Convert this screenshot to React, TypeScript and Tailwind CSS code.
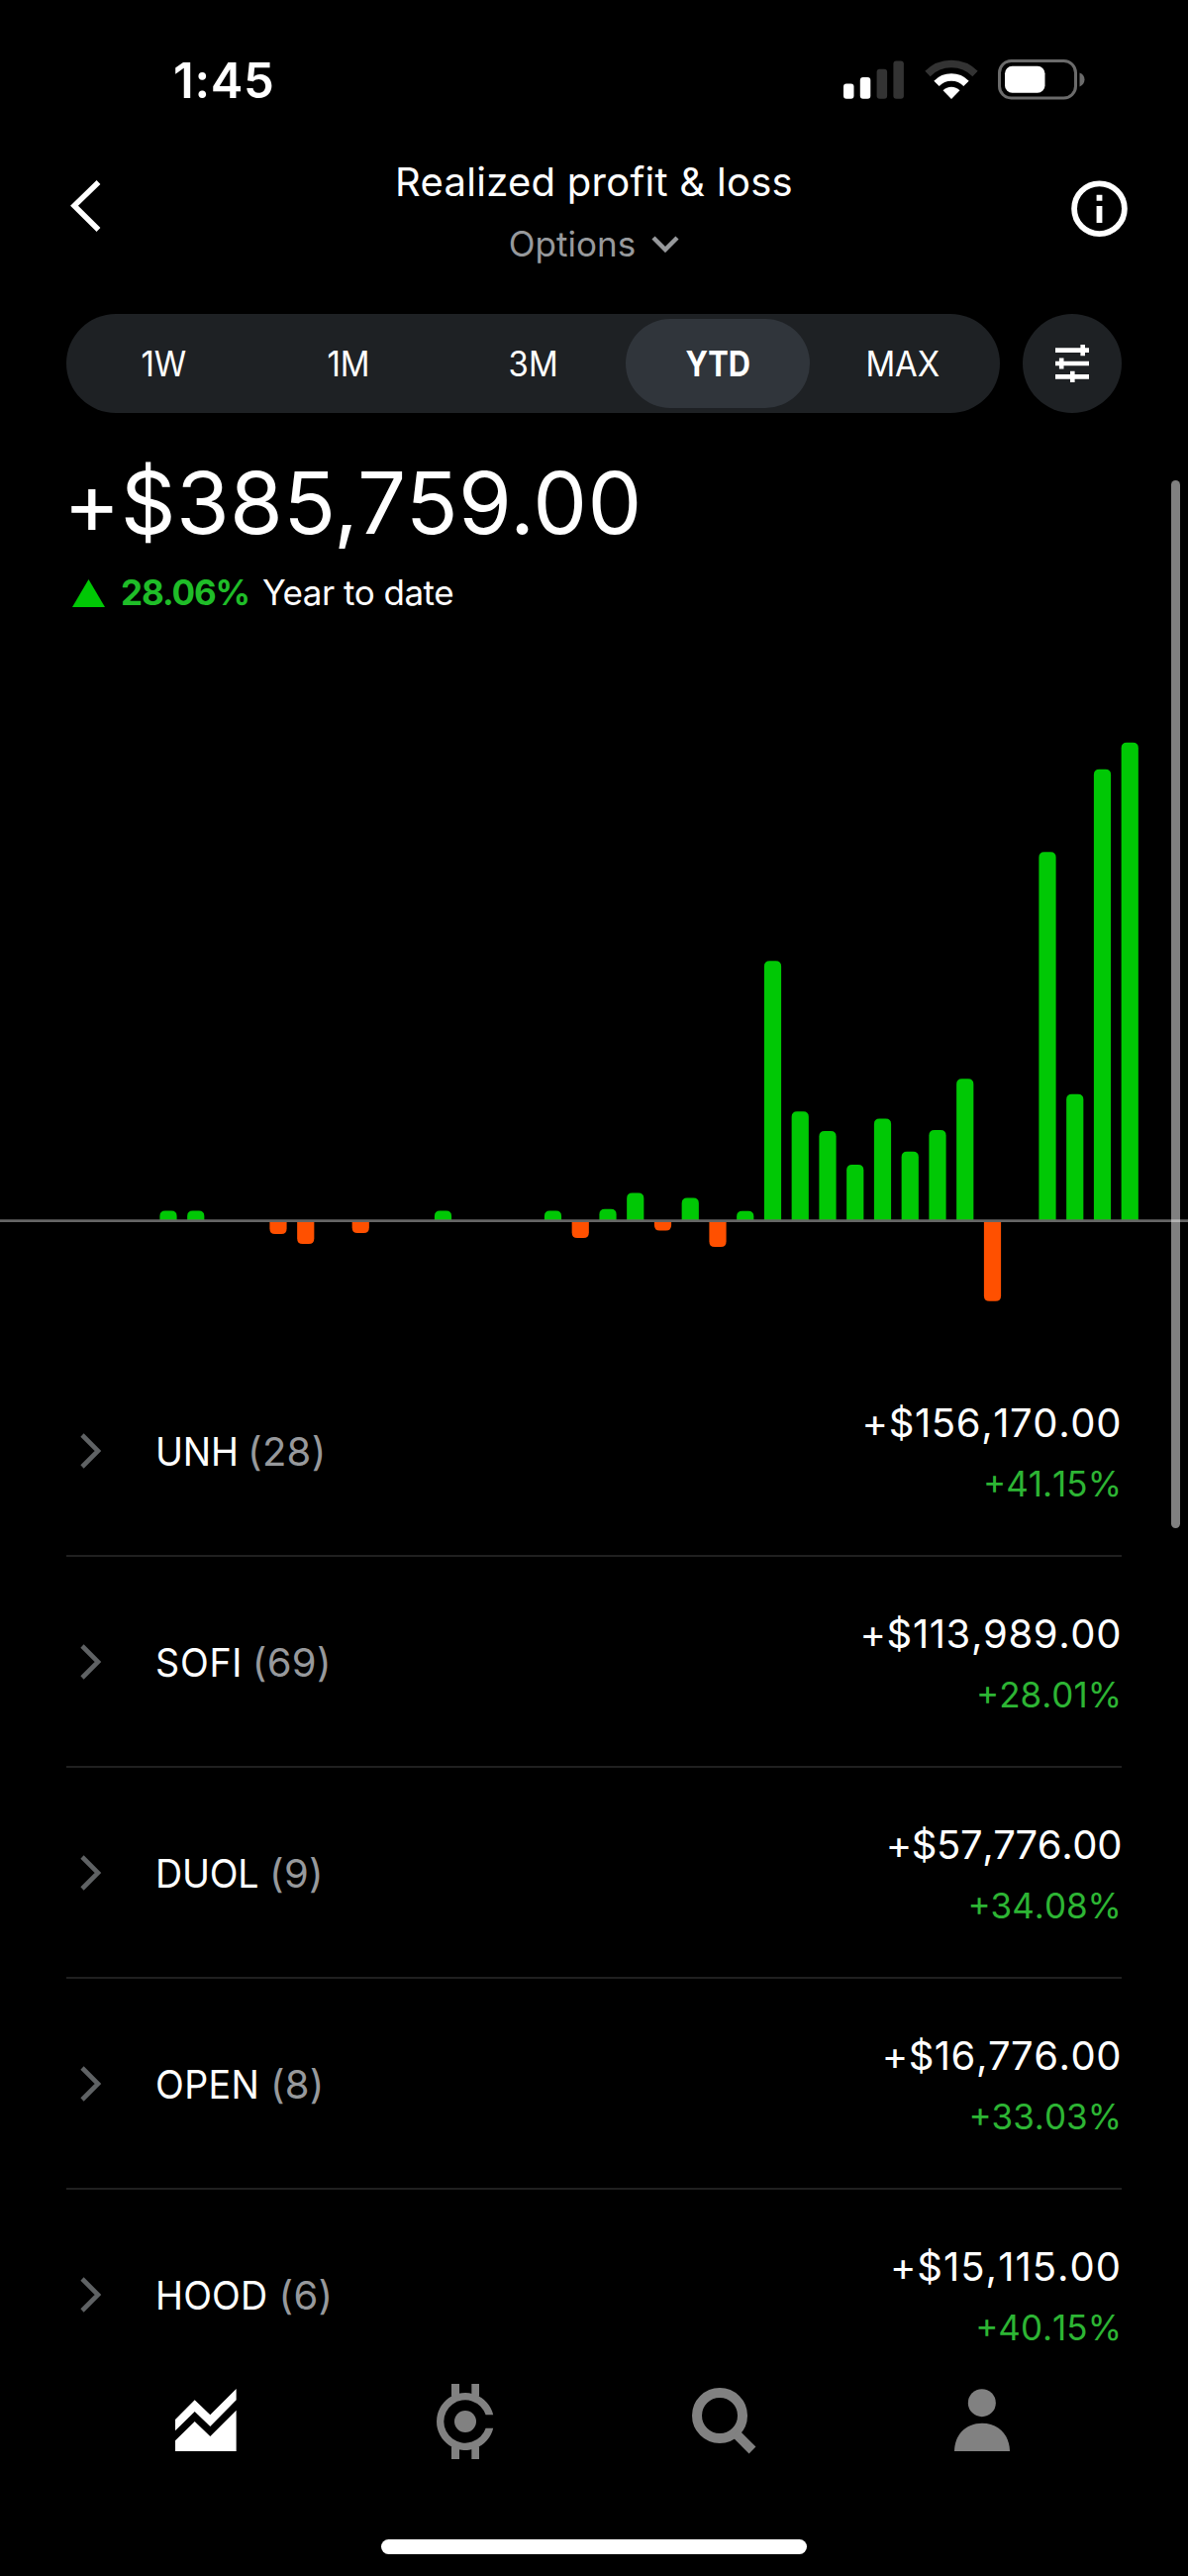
type Position = {
    symbol: string;
    count: number;
    amount: string;
    percent: string;
    nameClass: string;
    amountClass: string;
};

type Bar = {
    slot: number;
    edge: number;
};

const RANGES = ["1W", "1M", "3M", "YTD", "MAX"];

const POSITIONS: Position[] = [
    {
        symbol: "UNH",
        count: 28,
        amount: "+$156,170.00",
        percent: "+41.15%",
        nameClass: "tracking-[-0.2px]",
        amountClass: "tracking-[0.6px]",
    },
    {
        symbol: "SOFI",
        count: 69,
        amount: "+$113,989.00",
        percent: "+28.01%",
        nameClass: "tracking-[0.8px]",
        amountClass: "tracking-[0.6px]",
    },
    {
        symbol: "DUOL",
        count: 9,
        amount: "+$57,776.00",
        percent: "+34.08%",
        nameClass: "tracking-[-0.2px]",
        amountClass: "tracking-[-0.4px]",
    },
    {
        symbol: "OPEN",
        count: 8,
        amount: "+$16,776.00",
        percent: "+33.03%",
        nameClass: "tracking-[0.4px]",
        amountClass: "tracking-[0.5px]",
    },
    {
        symbol: "HOOD",
        count: 6,
        amount: "+$15,115.00",
        percent: "+40.15%",
        nameClass: "tracking-[0.2px]",
        amountClass: "tracking-[1px]",
    },
];

// edge: distance of the bar's end from the zero line, negative for a loss
const BARS: Bar[] = [
    { slot: 0, edge: 10 },
    { slot: 1, edge: 10 },
    { slot: 4, edge: -13.5 },
    { slot: 5, edge: -23.5 },
    { slot: 7, edge: -12.5 },
    { slot: 10, edge: 10 },
    { slot: 14, edge: 10 },
    { slot: 15, edge: -17.5 },
    { slot: 16, edge: 11.7 },
    { slot: 17, edge: 28 },
    { slot: 18, edge: -10 },
    { slot: 19, edge: 23 },
    { slot: 20, edge: -26.5 },
    { slot: 21, edge: 9.7 },
    { slot: 22, edge: 262.2 },
    { slot: 23, edge: 110.2 },
    { slot: 24, edge: 90.5 },
    { slot: 25, edge: 56.5 },
    { slot: 26, edge: 103 },
    { slot: 27, edge: 69.8 },
    { slot: 28, edge: 91.5 },
    { slot: 29, edge: 143.2 },
    { slot: 30, edge: -81.2 },
    { slot: 32, edge: 372.2 },
    { slot: 33, edge: 127.8 },
    { slot: 34, edge: 455.8 },
    { slot: 35, edge: 482.8 },
];

const ZERO = 532.5;

function barPath({ slot, edge }: Bar) {
    const x = 161.4 + slot * 27.75;
    const r = 5.5;
    const end = ZERO - edge;
    const dir = edge > 0 ? 1 : -1;
    return `M${x} ${ZERO}V${end + r * dir}Q${x} ${end} ${x + r} ${end}H${x + 17.2 - r}Q${x + 17.2} ${end} ${x + 17.2} ${end + r * dir}V${ZERO}Z`;
}

function StatusBar() {
    return (
        <div className="flex h-[150px] items-start justify-between pl-[175px] pr-[104px]">
            <div className="mt-[52px] text-[49px] font-semibold leading-[60px] tracking-[0.7px]">1:45</div>
            <div className="mt-[60px] flex">
                <svg width="61" height="41" viewBox="0 0 61 41" className="mr-[21px]">
                    <rect x="0" y="24.5" width="10.5" height="15.3" rx="3" fill="#fff" />
                    <rect x="16.8" y="18" width="10.5" height="21.8" rx="3" fill="#fff" />
                    <rect x="33.6" y="9.8" width="10.5" height="30" rx="3" fill="#333" />
                    <rect x="50.4" y="1.4" width="10.5" height="38.4" rx="3" fill="#333" />
                </svg>
                <svg width="54" height="41" viewBox="0 0 54 41" className="mr-5">
                    <path d="M3 14.5A34 34 0 0 1 51 14.5" fill="none" stroke="#333" strokeWidth="7.5" />
                    <path d="M12 24.3A21 21 0 0 1 42 24.3" fill="none" stroke="#fff" strokeWidth="7.5" />
                    <path d="M27 40L18.5 31.3A12 12 0 0 1 35.5 31.3Z" fill="#fff" />
                </svg>
                <svg width="88" height="41" viewBox="0 0 88 41">
                    <rect x="1.5" y="1.5" width="77" height="37.5" rx="12" fill="none" stroke="#6b6b6b" strokeWidth="3" />
                    <rect x="7" y="6.8" width="40.5" height="27" rx="7.5" fill="#fff" />
                    <path d="M82.5 13.5C85.5 14.5 87.5 17 87.5 20.3S85.5 26.5 82.5 27.5Z" fill="#6b6b6b" />
                </svg>
            </div>
        </div>
    );
}

function Header() {
    return (
        <header className="flex h-[167px] items-start justify-between pl-[71px] pr-[61px]">
            <svg width="31" height="52" viewBox="0 0 31 52" className="mr-4 mt-8">
                <path d="M28.5 2L4 25.7L28.5 50" fill="none" stroke="#fff" strokeWidth="5.5" />
            </svg>
            <div className="flex flex-col items-center">
                <h1 className="mt-[9px] text-[40px] leading-[49px] tracking-[0.27px]">Realized profit &amp; loss</h1>
                <div className="mt-[14px] flex items-center gap-4 text-[35px] leading-[48px] text-[#97999c]">
                    Options
                    <svg width="28" height="17" viewBox="0 0 28 17">
                        <path d="M2 2L14 14L26 2" fill="none" stroke="currentColor" strokeWidth="4.5" />
                    </svg>
                </div>
            </div>
            <svg width="57" height="57" viewBox="0 0 57 57" className="mt-8">
                <circle cx="28.5" cy="28.7" r="25.4" fill="none" stroke="#fff" strokeWidth="5.8" />
                <path d="M25.6 14.7H31.4V20.7H25.6ZM25.6 26H31.4V43H25.6Z" fill="#fff" />
            </svg>
        </header>
    );
}

function RangePicker() {
    return (
        <div className="flex justify-between px-[67px]">
            <div className="flex h-[100px] w-[943px] rounded-full bg-[#1e2124] p-[5px]">
                {RANGES.map((range) => {
                    const active = range === "YTD";
                    return (
                        <button
                            key={range}
                            type="button"
                            className={[
                                "flex flex-1 items-center justify-center rounded-full text-[35px]",
                                active ? "bg-[#30353b] font-bold" : "",
                            ].join(" ")}
                        >
                            <span className={active ? "inline-block scale-x-[0.88]" : "inline-block scale-x-[0.94]"}>
                                {range}
                            </span>
                        </button>
                    );
                })}
            </div>
            <button type="button" className="flex size-[100px] items-center justify-center rounded-full bg-[#1e2124]">
                <svg width="34" height="38" viewBox="0 0 34 38">
                    <path d="M0 5.6H34M0 19H34M0 32.4H34" stroke="#fff" strokeWidth="4.6" />
                    <path d="M27.7 0V11.2M6.2 13.4V24.6M17.3 26.8V38" stroke="#fff" strokeWidth="4.6" />
                </svg>
            </button>
        </div>
    );
}

function Summary() {
    return (
        <div className="h-[283px] pl-[67px] pt-[41px]">
            <div className="-ml-[3px] text-[87px] leading-[100px] tracking-[0.3px]">+$385,759.00</div>
            <div className="mt-[16px] flex items-center text-[35px] leading-[49px]">
                <svg width="33" height="28" viewBox="0 0 33 28" className="ml-1.5">
                    <path d="M16.5 0L33 28H0Z" fill="#00c805" />
                </svg>
                <span className="ml-4 font-bold tracking-[-1.1px] text-[#1fbd28]">28.06%</span>
                <span className="ml-[13px] tracking-[-0.5px]">Year to date</span>
            </div>
        </div>
    );
}

function Chart() {
    return (
        <svg width="1200" height="659" viewBox="0 0 1200 659" className="block">
            {BARS.map((bar) => (
                <path key={bar.slot} d={barPath(bar)} fill={bar.edge > 0 ? "#00c805" : "#ff5000"} />
            ))}
            <rect x="0" y="531.3" width="1200" height="2.7" fill="#666" />
        </svg>
    );
}

function PositionList() {
    return (
        <ul className="mx-[67px] h-[1041px]">
            {POSITIONS.map((p) => (
                <li key={p.symbol} className="flex h-[213px] items-start border-b-2 border-[#202020] last:h-[189px] last:border-0">
                    <svg width="23" height="36" viewBox="0 0 23 36" className="ml-[13px] mt-[88px]">
                        <path d="M3 2L19 18L3 34" fill="none" stroke="#5f6264" strokeWidth="4.6" />
                    </svg>
                    <div className="ml-[54px] mt-[76px] flex text-[40px] leading-[61px]">
                        <span className={["origin-left scale-x-[0.94]", p.nameClass].join(" ")}>{p.symbol}</span>
                        <span className="ml-1 tracking-[0.3px] text-[#97999c]">({p.count})</span>
                    </div>
                    <div className="ml-auto mt-[47px] text-right [font-kerning:none]">
                        <div className={["text-[40px] leading-[61px]", p.amountClass].join(" ")}>{p.amount}</div>
                        <div className="text-[35px] leading-[62px] text-[#2db534]">{p.percent}</div>
                    </div>
                </li>
            ))}
        </ul>
    );
}

function TabBar() {
    return (
        <nav className="mx-[77px] grid h-[164px] grid-cols-4 justify-items-center text-[#818181]">
            <svg width="61.7" height="63.3" viewBox="142 97 185 190" className="mt-3">
                <path d="M142 190L201 131L248 176L327 97V131L248 211L201 166L142 224Z" fill="#fff" />
                <path d="M142 254L201 196L248 241L327 162V287H142Z" fill="#fff" />
            </svg>
            <svg width="58" height="76" viewBox="933 80 174 228" className="ml-0.5 mt-[7px]">
                <path
                    d="M1104.7 174A87 87 0 1 0 1104.7 214H1081.8A65 65 0 1 1 1081.8 174Z"
                    fill="currentColor"
                />
                <path d="M978 80H1002V118H978ZM1039 80H1062V118H1039ZM978 270H1002V308H978ZM1039 270H1062V308H1039Z" fill="currentColor" />
                <circle cx="1020" cy="194" r="33" fill="currentColor" />
            </svg>
            <svg width="64.7" height="67" viewBox="149 93 194 201" className="ml-0.5 mt-[11px]">
                <circle cx="233" cy="177" r="69" fill="none" stroke="currentColor" strokeWidth="30" />
                <path d="M280 230L332 282" stroke="currentColor" strokeWidth="29" />
            </svg>
            <svg width="56" height="63.3" viewBox="941 97 168 190" className="mt-3">
                <circle cx="1024.5" cy="139.5" r="42" fill="currentColor" />
                <path d="M941 287C941 238 974 201 1025 201S1109 238 1109 287Z" fill="currentColor" />
            </svg>
        </nav>
    );
}

export default function App() {
    return (
        <main className="relative h-[2601px] w-[1200px] overflow-hidden bg-black font-['Inter',sans-serif] text-white">
            <StatusBar />
            <Header />
            <RangePicker />
            <Summary />
            <Chart />
            <PositionList />
            <TabBar />
            <div className="mx-auto h-[15px] w-[430px] rounded-full bg-white" />
            <div className="absolute right-2 top-[485px] h-[1058px] w-[9px] rounded-full bg-white/50" />
        </main>
    );
}
